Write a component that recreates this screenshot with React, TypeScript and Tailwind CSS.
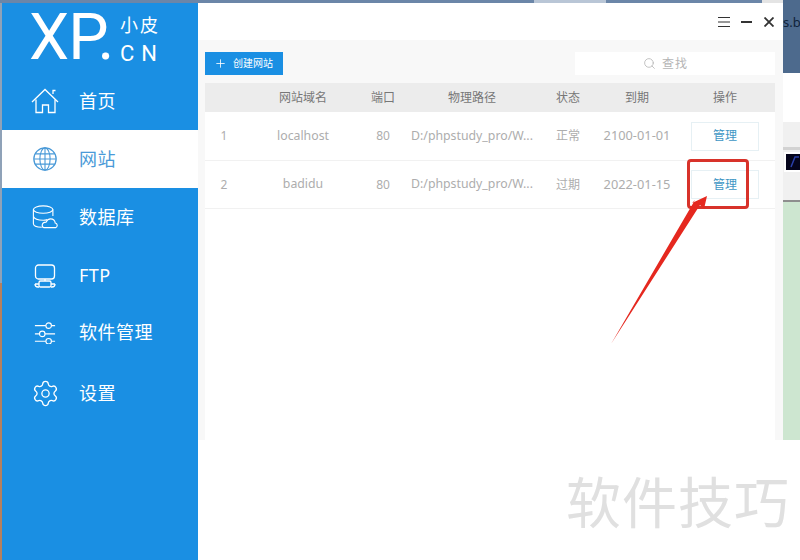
import { Plus, Search, Settings } from 'lucide-react';
import type { ReactNode } from 'react';

const font = "font-['Noto_Sans','Noto_Sans_CJK_SC',sans-serif]";

const HomeIcon = () => (
  <svg width="28" height="26" viewBox="0 0 28 26" fill="none" stroke="currentColor" strokeWidth="1.3">
    <path d="M1 14 14 1.5 27 14" />
    <path d="M22 6V2.5h2.5" />
    <path d="M5 11.5V24.5h6.5V17h6v7.5H24V11.5" />
  </svg>
);

const GlobeIcon = () => (
  <svg width="26" height="26" viewBox="0 0 28 28" fill="none" stroke="currentColor" strokeWidth="1.2">
    <circle cx="14" cy="14" r="12" strokeWidth="1.4" />
    <ellipse cx="14" cy="14" rx="5.5" ry="12" />
    <path d="M14 2v24M3.5 8.5h21M2 14h24M3.5 19.5h21" />
  </svg>
);

const DatabaseIcon = () => (
  <svg width="26" height="26" viewBox="0 0 28 26" fill="none" stroke="currentColor" strokeWidth="1.2">
    <ellipse cx="12" cy="5" rx="10.5" ry="4" />
    <path d="M1.5 5v15c0 2.500 4 4 9 4M22.500 5v7M1.500 12.500c1 2.500 5 4 10.500 4 2 0 3-.2 4.500-.7" />
    <path d="M13 24.500h12.500c2.500-1 2-4.500-.5-5-.3-3-2.500-4.500-5-4.500-2.500 0-4 1.500-4.800 3.500-2.500 0-4.200 1.500-4.200 3.500 0 1.300 1 2.500 2 2.500z" />
  </svg>
);

const ServerIcon = () => (
  <svg width="22" height="24" viewBox="0 0 22 24" fill="none" stroke="currentColor" strokeWidth="1.3">
    <rect x="1.500" y="1" width="19" height="14" rx="3" />
    <path d="M11 15v2M1 20h4M17 20h4" />
    <rect x="5" y="17" width="12" height="6" rx="1.500" />
    <path d="M1 20c0 2 1 3 3 3h1M21 20c0 2-1 3-3 3h-1" />
  </svg>
);

const SlidersIcon = () => (
  <svg width="24" height="22" viewBox="0 0 26 24" fill="none" stroke="currentColor" strokeWidth="1.2">
    <path d="M2 4h12M20 4h4M2 13h5M13 13h11M2 21h12M20 21h4" />
    <circle cx="17" cy="4" r="3" />
    <circle cx="10" cy="13" r="3" />
    <circle cx="17" cy="21" r="3" />
  </svg>
);

const menu: { name: string; icon: ReactNode; height: string; active?: boolean }[] = [
  { name: '首页', icon: <HomeIcon />, height: 'h-[58px]' },
  { name: '网站', icon: <GlobeIcon />, height: 'h-[58px]', active: true },
  { name: '数据库', icon: <DatabaseIcon />, height: 'h-[58px]' },
  { name: 'FTP', icon: <ServerIcon />, height: 'h-[59px]' },
  { name: '软件管理', icon: <SlidersIcon />, height: 'h-[55px]' },
  { name: '设置', icon: <Settings size={29} strokeWidth={1.1} />, height: 'h-[66px]' },
];

const rows = [
  { id: 1, domain: 'localhost', port: 80, path: 'D:/phpstudy_pro/W...', status: '正常', expire: '2100-01-01' },
  { id: 2, domain: 'badidu', port: 80, path: 'D:/phpstudy_pro/W...', status: '过期', expire: '2022-01-15' },
];

const columns = 'grid grid-cols-[38px_120px_40px_138px_54px_84px_92px_4px] items-center text-center text-xs';

function Sidebar() {
  return (
    <aside className="w-[196px] h-[557px] bg-[#1a8fe3] text-white shrink-0">
      <div className="h-[69px] pl-[27px] flex items-start">
        <span className="font-['Roboto',sans-serif] font-normal text-[64px] leading-[70px] tracking-[-1px] w-[91px] whitespace-nowrap">XP.</span>
        <div className="mt-[10px]">
          <div className="text-[18px] leading-[24px] tracking-[2px] whitespace-nowrap">小皮</div>
          <div className="font-['Roboto',sans-serif] text-[22px] leading-[26px] mt-[4px] tracking-[7px] whitespace-nowrap">CN</div>
        </div>
      </div>
      <nav>
        {menu.map((item) => (
          <div
            key={item.name}
            className={`${item.height} pl-[28px] flex items-center ${item.active ? 'bg-white text-[#4a9ad8]' : ''}`}
          >
            <div className="w-[30px] flex justify-center">{item.icon}</div>
            <span className="ml-[19px] text-[18px] tracking-[0.5px]">{item.name}</span>
          </div>
        ))}
      </nav>
    </aside>
  );
}

function Toolbar() {
  return (
    <div className="h-[37px] flex items-center justify-end gap-[11px] pr-[9px] text-[#333]">
      <svg width="12" height="10" viewBox="0 0 12 10" stroke="currentColor" strokeWidth="1">
        <path d="M0 .5h12M0 5h12M0 9.500h12" />
      </svg>
      <div className="w-[11px] h-[2px] bg-[#333]" />
      <svg width="10" height="10" viewBox="0 0 10 10" stroke="currentColor" strokeWidth="1.800" className="ml-[1px]">
        <path d="M.5.500l9 9M9.500.500l-9 9" />
      </svg>
    </div>
  );
}

function SiteTable() {
  return (
    <div className="flex-1 bg-white">
      <div className={`${columns} h-[29px] bg-[#ececec] text-[#777]`}>
        <div />
        <div>网站域名</div>
        <div>端口</div>
        <div>物理路径</div>
        <div>状态</div>
        <div>到期</div>
        <div>操作</div>
      </div>
      {rows.map((row, i) => (
        <div key={row.id} className={`${columns} ${i === 0 ? 'h-[49px]' : 'h-[48px]'} border-b border-[#f1f1f1] text-[#adadad]`}>
          <div>{row.id}</div>
          <div className="text-[12.300px]">{row.domain}</div>
          <div>{row.port}</div>
          <div className="text-[12.300px] whitespace-nowrap">{row.path}</div>
          <div>{row.status}</div>
          <div className="text-[12.800px]">{row.expire}</div>
          <div className="flex justify-center">
            <button className="w-[68px] h-[29px] border border-[#e6f0f4] text-[#3d96c4] bg-white">管理</button>
          </div>
        </div>
      ))}
    </div>
  );
}

function RightBackdrop() {
  return (
    <div className="w-[17px] h-[557px] flex flex-col shrink-0 overflow-hidden">
      <div className="h-[70px] bg-[#4d6a8d] text-[13px] leading-[38px] text-[#10233a] whitespace-nowrap">s.ba</div>
      <div className="h-[49px] bg-white" />
      <div className="h-[25px] bg-[#f0f0f0]" />
      <div className="h-[3px] bg-[#d2d2d2]" />
      <div className="h-[25px] bg-[#f0f0f0] pt-[2px] pl-[1px]">
        <div className="h-[20px] border-2 border-r-0 border-white bg-[#05051c] pl-[4px]">
          <svg width="10" height="14" viewBox="0 0 10 14" fill="none" stroke="#2a3fa8" strokeWidth="1.500">
            <path d="M1 13 5 3h4" />
          </svg>
        </div>
      </div>
      <div className="h-[25px] bg-[#f0f0f0]" />
      <div className="h-[2px] bg-[#8e8e8e]" />
      <div className="h-[238px] bg-[#cde6d0]" />
      <div className="flex-1 bg-white" />
    </div>
  );
}

export default function App() {
  return (
    <div className={`relative w-[800px] h-[560px] overflow-hidden bg-white ${font}`}>
      <div className="h-[3px] flex">
        <div className="w-[534px] bg-[#6b86a8]" />
        <div className="w-[72px] bg-[#b9c6d6]" />
        <div className="w-[156px] bg-[#6b86a8]" />
        <div className="w-[21px] bg-[#e4e4e4]" />
        <div className="flex-1 bg-[#4d6a8d]" />
      </div>
      <div className="flex">
        <div className="w-[2px] h-[557px] shrink-0 flex flex-col">
          <div className="h-[280px] bg-[#8fa2b8]" />
          <div className="flex-1 bg-[#b5805f]" />
        </div>
        <Sidebar />
        <main className="w-[585px] h-[557px] bg-white shrink-0">
          <Toolbar />
          <div className="h-[400px] bg-[#f8f8f8] pl-[7px] pr-[8px] pt-[12px] flex flex-col">
            <div className="flex justify-between h-[23px] mb-[8px]">
              <button className="w-[78px] bg-[#1a8fe3] text-white flex items-center pl-[9px] text-[10px]">
                <Plus size={13} strokeWidth={1.5} />
                <span className="ml-[6px]">创建网站</span>
              </button>
              <div className="w-[200px] bg-white flex items-center pl-[68px] text-xs text-[#b5b5b5]">
                <Search size={13} strokeWidth={1.5} />
                <span className="ml-[6px] tracking-[1px]">查找</span>
              </div>
            </div>
            <SiteTable />
          </div>
        </main>
        <RightBackdrop />
      </div>

      {/* annotation over the screenshot */}
      <div className="absolute left-[687px] top-[159px] w-[62px] h-[50px] border-[3px] border-[#d8322a] rounded-[4px]" />
      <svg className="absolute left-0 top-0" width="800" height="560" fill="#e5281f">
        <polygon points="707,196 704,209 700,205 611,344 695,200 692,203" />
      </svg>

      <div className="absolute left-[566px] top-[460px] text-[55px] leading-[78px] tracking-[1px] text-[#e0e0e0] font-['Noto_Sans_CJK_SC',sans-serif] whitespace-nowrap">
        软件技巧
      </div>
    </div>
  );
}
